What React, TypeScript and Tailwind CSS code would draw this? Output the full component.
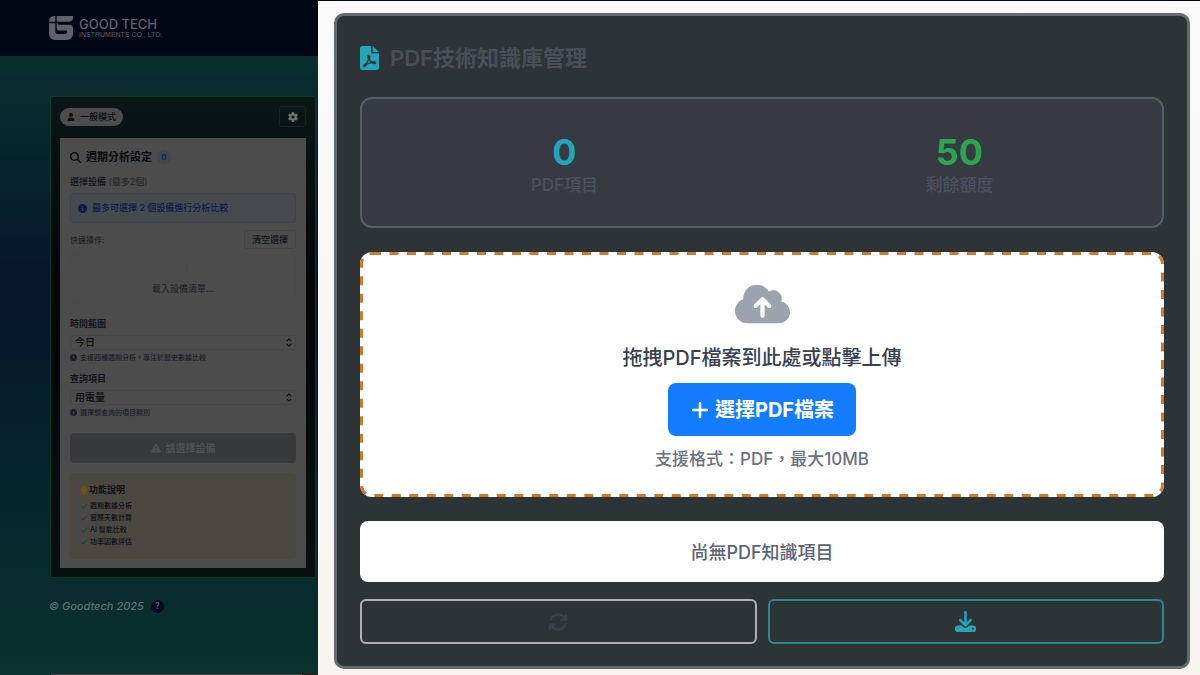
import type { ReactNode } from "react";
import {
  FaArrowsRotate,
  FaCheck,
  FaCircleInfo,
  FaClock,
  FaCloudArrowUp,
  FaDownload,
  FaGear,
  FaLightbulb,
  FaMagnifyingGlass,
  FaPlus,
  FaTriangleExclamation,
  FaUser,
} from "react-icons/fa6";

const FEATURES = ["週期數據分析", "實際天數計算", "AI 智能比較", "功率因數評估"];

function Logo() {
  return (
    <a href="#" className="flex items-center gap-[6px] text-[#5f626a]">
      <svg viewBox="0 0 24 24" className="h-6 w-6" fill="currentColor" aria-hidden="true">
        <path d="M5 0h1.300v5.800H0V5a5 5 0 0 1 5-5z" />
        <path d="M7.700 0H24v1.800a4 4 0 0 1-4 4H7.700z" />
        <path d="M0 7.200h6.300V16a2 2 0 0 0 2 2H16a2 2 0 0 0 2-2v-1.500h-7.500a2.800 2.800 0 0 1-2.800-2.800V7.200h1.600v1.500H20a4 4 0 0 1 4 4V18a6 6 0 0 1-6 6H6a6 6 0 0 1-6-6z" />
      </svg>
      <span className="flex flex-col whitespace-nowrap">
        <span className="text-[13px] leading-[13px] font-medium">GOOD TECH</span>
        <span className="font-['Liberation_Sans',sans-serif] text-[7px] leading-[8px]">INSTRUMENTS CO., LTD.</span>
      </span>
    </a>
  );
}

function PdfFileIcon() {
  return (
    <svg viewBox="0 0 384 512" className="h-[24px] w-[19px]" preserveAspectRatio="none" aria-hidden="true">
      <path
        fill="#24a5ba"
        d="M0 48C0 21.500 21.500 0 48 0H224V128c0 17.700 14.300 32 32 32H384V464c0 26.500-21.500 48-48 48H48c-26.500 0-48-21.500-48-48z"
      />
      <path fill="#24a5ba" d="M384 128H256V0z" />
      <path
        fill="#2d3436"
        stroke="#2d3436"
        strokeWidth="14"
        d="M240 331.800c-20-12.200-33.300-29-42.700-53.800 4.500-18.500 11.600-46.600 6.200-64.200-4.700-29.400-42.400-26.500-47.800-6.800-5 18.300-.4 44.100 8.100 77-11.600 27.600-28.700 64.600-40.800 85.800-27.300 14-73.800 44.600-54.700 68.100 5.600 6.900 16 10 21.500 10 17.900 0 35.700-18 61.100-61.800 25.800-8.500 54.100-19.100 79-23.200 21.700 11.800 47.100 19.500 64 19.500 29.200 0 31.200-32 19.700-43.400-13.900-13.600-54.300-9.700-73.600-7.200z"
      />
      <path fill="#24a5ba" d="M180.200 303.300c-7.700 20.200-17.300 43.300-28.400 62.700 18.300-7 39-17.200 62.900-21.900-12.700-9.600-24.900-23.400-34.500-40.800z" />
    </svg>
  );
}

type SelectFieldProps = { id: string; label: string; value: string; icon: ReactNode; hint: string };

function SelectField({ id, label, value, icon, hint }: SelectFieldProps) {
  return (
    <div className="flex flex-col">
      <label htmlFor={id} className="mb-[5px] text-[9px] leading-[12px] font-semibold text-[#11151b]">
        {label}
      </label>
      <div className="relative">
        <select
          id={id}
          className="block h-[15px] w-full appearance-none rounded-[3px] border border-[#444648] bg-transparent px-[4px] text-[10px] leading-[13px] font-medium text-[#0a0c10]"
        >
          <option>{value}</option>
        </select>
        <svg
          viewBox="0 0 8 10"
          className="pointer-events-none absolute top-[3px] right-[3px] h-[9px] w-[8px]"
          fill="none"
          stroke="#0a0c10"
          strokeWidth="1.200"
          aria-hidden="true"
        >
          <path d="M1.500 3.500 4 1l2.500 2.500M1.500 6.500 4 9l2.500-2.500" />
        </svg>
      </div>
      <p className="mt-[2px] flex items-center gap-[3px] text-[7px] leading-[11px] font-medium text-[#1b2028]">
        {icon}
        {hint}
      </p>
    </div>
  );
}

function Sidebar() {
  return (
    <div className="flex w-[318px] shrink-0 flex-col overflow-hidden bg-[#0a2f2e] text-[9px]">
      <header className="flex h-14 shrink-0 items-center bg-[#000614] pl-[49px]">
        <Logo />
      </header>

      <div className="flex flex-1 flex-col bg-linear-to-b from-[#0a302f] via-[#04162a] via-37% to-[#0a322e]">
        <main className="mt-[40px] mr-[2px] ml-[50px] rounded-[3px] border border-[#0c3a22] bg-linear-to-b from-[#0a1716] via-[#020609] via-40% to-[#07110f] px-[9px] pt-[9px] pb-[9px]">
          <div className="flex items-center justify-between pb-[11px]">
            <span className="flex h-[18px] items-center gap-[5px] rounded-full bg-[#4c4c4c] px-[7px] text-[9px] font-medium text-[#0a0c10]">
              <FaUser className="h-[8px] w-[8px]" />
              一般模式
            </span>
            <button
              type="button"
              aria-label="設定"
              className="flex h-[21px] w-[27px] items-center justify-center rounded-[3px] border border-[#18211f] text-[#717373]"
            >
              <FaGear className="h-[10px] w-[10px]" />
            </button>
          </div>

          <div className="bg-[#4c4c4c] px-[10px] pt-[11px] pb-[9px]">
            <h2 className="flex items-center gap-[5px] text-[11px] leading-[16px] font-semibold text-[#080a0e]">
              <FaMagnifyingGlass className="h-[11px] w-[11px]" />
              週期分析設定
              <span className="flex h-[14px] w-[14px] items-center justify-center rounded-full bg-[#42474e] text-[8px] text-[#0d2052]">
                0
              </span>
            </h2>

            <p className="mt-[11px] text-[9px] leading-[12px] font-medium text-[#11151b]">
              選擇設備 <span className="font-normal text-[#20242b]">(最多2個)</span>
            </p>

            <div className="mt-[5px] flex h-[30px] items-center gap-[5px] rounded-[4px] border border-[#3c444e] bg-[#464a4e] px-[7px] text-[9px] font-medium text-[#0b1b47]">
              <FaCircleInfo className="h-[9px] w-[9px]" />
              最多可選擇 2 個設備進行分析比較
            </div>

            <div className="mt-[7px] flex items-center justify-between">
              <span className="text-[8px] text-[#15191f]">快速操作:</span>
              <button
                type="button"
                className="h-[19px] rounded-[3px] border border-[#414347] px-[7px] text-[9px] font-medium text-[#11151b]"
              >
                清空選擇
              </button>
            </div>

            <div className="mt-[5px] flex h-[49px] flex-col items-center rounded-[3px] border border-[#494a4b] pt-[9px] text-[9px] text-[#1b2028]">
              <span className="h-[10px] w-[10px] rounded-full border border-transparent border-r-[#444648]" />
              <span className="mt-[9px] leading-[12px]">載入設備清單...</span>
            </div>

            <div className="mt-[15px] flex flex-col gap-[10px]">
              <SelectField
                id="range"
                label="時間範圍"
                value="今日"
                icon={<FaClock className="h-[7px] w-[7px]" />}
                hint="支援四種週期分析，專注於歷史數據比較"
              />
              <SelectField
                id="item"
                label="查詢項目"
                value="用電量"
                icon={<FaCircleInfo className="h-[7px] w-[7px]" />}
                hint="選擇想查詢的項目類別"
              />
            </div>

            <button
              type="button"
              disabled
              className="mt-[15px] flex h-[30px] w-full items-center justify-center gap-[5px] rounded-[4px] bg-[#373a3b] text-[10px] font-semibold text-[#4e5051]"
            >
              <FaTriangleExclamation className="h-[10px] w-[10px]" />
              請選擇設備
            </button>

            <section className="mt-[10px] rounded-[4px] border border-[#4c4835] bg-[#4a4841] px-[9px] pt-[10px] pb-[10px] text-[#0e1013]">
              <h3 className="mb-[4px] flex items-center gap-[1px] text-[9px] leading-[12px] font-semibold">
                <FaLightbulb className="h-[9px] w-[8px] text-[#7a5508]" />
                功能說明
              </h3>
              <ul>
                {FEATURES.map((feature) => (
                  <li key={feature} className="flex items-center gap-[2px] text-[7px] leading-[12px] font-medium">
                    <FaCheck className="h-[8px] w-[8px] text-[#0b4a2c]" />
                    {feature}
                  </li>
                ))}
              </ul>
            </section>
          </div>
        </main>

        <footer className="mt-[20px] flex items-center gap-[7px] pl-[49px] text-[11px] leading-[16px] font-medium text-[#5c7473] italic">
          © Goodtech 2025
          <button
            type="button"
            aria-label="說明"
            className="flex h-[13px] w-[13px] items-center justify-center rounded-full bg-[#000a1f] text-[9px] text-[#6b7484] not-italic"
          >
            ?
          </button>
        </footer>

        <div className="mt-auto mr-[2px] ml-[51px] flex justify-end bg-[#44463f]">
          <span className="h-px w-[14px] bg-[#4d0a12]" />
        </div>
      </div>
    </div>
  );
}

function Stat({ value, label, tone }: { value: string; label: string; tone: string }) {
  return (
    <div className="flex flex-col items-center">
      <span className={`text-[36px] leading-[44px] font-bold ${tone}`}>{value}</span>
      <span className="text-[17px] leading-[23px] font-medium text-[#4a5160]">{label}</span>
    </div>
  );
}

function DropZone() {
  return (
    <section className="relative mt-6 flex flex-col items-center rounded-[12px] bg-white pt-[30px] pb-[25px]">
      <svg className="pointer-events-none absolute inset-0 h-full w-full overflow-visible" aria-hidden="true">
        <rect
          x="1.500"
          y="1.500"
          rx="10.500"
          fill="none"
          stroke="#cc7a2e"
          strokeWidth="3"
          strokeDasharray="9 8.500"
          className="h-[calc(100%-3px)] w-[calc(100%-3px)]"
        />
      </svg>
      <FaCloudArrowUp className="h-[44px] w-[55px] text-[#9ca3af]" />
      <p className="mt-[18px] text-[20px] leading-[28px] font-medium text-[#374151]">拖拽PDF檔案到此處或點擊上傳</p>
      <button
        type="button"
        className="mt-[11px] flex h-[53px] items-center gap-[5px] rounded-[8px] bg-[#147dfe] px-[22px] text-[20px] font-bold text-white"
      >
        <FaPlus className="h-[20px] w-[20px]" />
        選擇PDF檔案
      </button>
      <p className="mt-[11px] text-[17px] leading-[25px] font-medium text-[#6b7280]">支援格式：PDF，最大10MB</p>
    </section>
  );
}

function KnowledgeBase() {
  return (
    <div className="flex min-w-0 flex-1 flex-col border-t border-[#02051c] bg-linear-to-b from-[#f9f9fa] to-[#f8f5f0] pt-[12px] pr-[10px] pb-[6px] pl-[16px]">
      <div className="flex flex-1 flex-col rounded-[10px] border-3 border-[#626c70] bg-[#2d3436] px-[23px] pt-[28px] pb-[22px]">
        <h1 className="flex items-center gap-[11px] text-[22px] leading-[28px] font-semibold text-[#484f58]">
          <PdfFileIcon />
          PDF技術知識庫管理
        </h1>

        <section className="mt-[25px] grid grid-cols-2 gap-[22px] rounded-[12px] border-2 border-[#555e63] bg-[#373a42] px-4 pt-[31px] pb-[29px]">
          <Stat value="0" label="PDF項目" tone="text-[#24a5ba]" />
          <Stat value="50" label="剩餘額度" tone="text-[#2aa651]" />
        </section>

        <DropZone />

        <p className="mt-6 rounded-[8px] bg-white pt-[19px] pb-[17px] text-center text-[18px] leading-[25px] font-medium text-[#5b6475]">
          尚無PDF知識項目
        </p>

        <div className="mt-[17px] flex gap-[11px]">
          <button
            type="button"
            aria-label="重新整理"
            className="flex h-[45px] flex-1 items-center justify-center rounded-[6px] border-2 border-[#aeb2b5] text-[#374151]"
          >
            <FaArrowsRotate className="h-[20px] w-[20px]" />
          </button>
          <button
            type="button"
            aria-label="下載"
            className="flex h-[45px] flex-1 items-center justify-center rounded-[6px] border-2 border-[#2b8796] text-[#24a5ba]"
          >
            <FaDownload className="h-[21px] w-[21px]" />
          </button>
        </div>
      </div>
    </div>
  );
}

export default function App() {
  return (
    <div className="flex min-h-screen font-['Inter','Noto_Sans_CJK_TC',sans-serif]" lang="zh-Hant">
      <Sidebar />
      <KnowledgeBase />
    </div>
  );
}
